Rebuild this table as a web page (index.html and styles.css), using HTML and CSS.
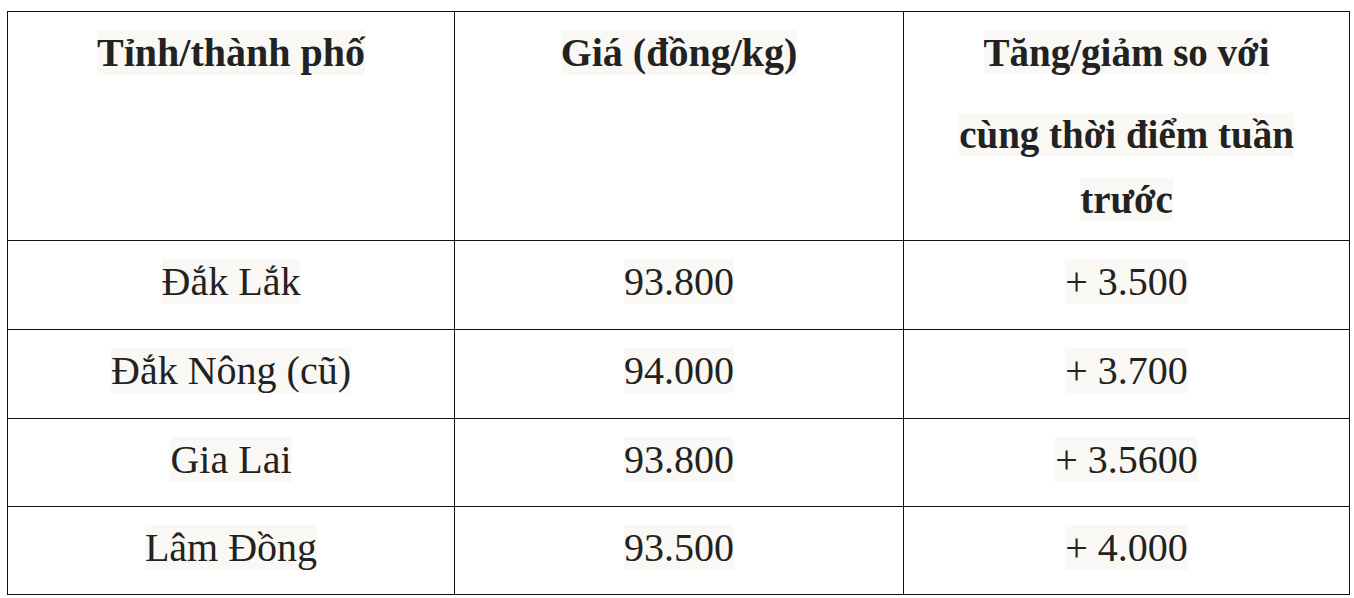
FILE: index.html
```html
<!DOCTYPE html>
<html lang="vi">
<head>
<meta charset="utf-8">
<title>Giá</title>
<link rel="stylesheet" href="styles.css">
</head>
<body>
<table class="price-table">
  <colgroup>
    <col class="c1"><col class="c2"><col class="c3">
  </colgroup>
  <thead>
    <tr class="head-row">
      <th><p><span class="hl">Tỉnh/thành phố</span></p></th>
      <th><p><span class="hl">Giá (đồng/kg)</span></p></th>
      <th><p><span class="hl">Tăng/giảm so với</span></p><p class="second"><span class="hl">cùng thời điểm tuần</span><br><span class="hl">trước</span></p></th>
    </tr>
  </thead>
  <tbody>
    <tr class="row-a"><td><p><span class="hl">Đắk Lắk</span></p></td><td><p><span class="hl">93.800</span></p></td><td><p><span class="hl">+ 3.500</span></p></td></tr>
    <tr class="row-a"><td><p><span class="hl">Đắk Nông (cũ)</span></p></td><td><p><span class="hl">94.000</span></p></td><td><p><span class="hl">+ 3.700</span></p></td></tr>
    <tr class="row-b"><td><p><span class="hl">Gia Lai</span></p></td><td><p><span class="hl">93.800</span></p></td><td><p><span class="hl">+ 3.5600</span></p></td></tr>
    <tr class="row-b"><td><p><span class="hl">Lâm Đồng</span></p></td><td><p><span class="hl">93.500</span></p></td><td><p><span class="hl">+ 4.000</span></p></td></tr>
  </tbody>
</table>
</body>
</html>
```
FILE: styles.css
```css
html, body {
  background: #ffffff;
}
body {
  margin: 11px 0 0 7px;
  font-family: "Liberation Serif", "Times New Roman", serif;
  color: #222222;
}
.price-table {
  border-collapse: collapse;
  table-layout: fixed;
  width: 1342px;
}
.c1 { width: 447px; }
.c2 { width: 449px; }
.c3 { width: 446px; }
.price-table th,
.price-table td {
  border: 1px solid #111111;
  padding: 8px;
  vertical-align: top;
  text-align: center;
  font-size: 40px;
  line-height: 65px;
}
.price-table th {
  font-weight: bold;
  font-size: 39px;
}
.price-table th:first-child,
.price-table th:nth-child(2) {
  font-size: 40px;
}
.price-table p {
  margin: 0;
}
.price-table p.second {
  margin-top: 17px;
}
.head-row th { height: 212px; }
.row-a td { height: 72px; }
.row-b td { height: 71px; }
.hl {
  background: #f9f8f4;
}
```
